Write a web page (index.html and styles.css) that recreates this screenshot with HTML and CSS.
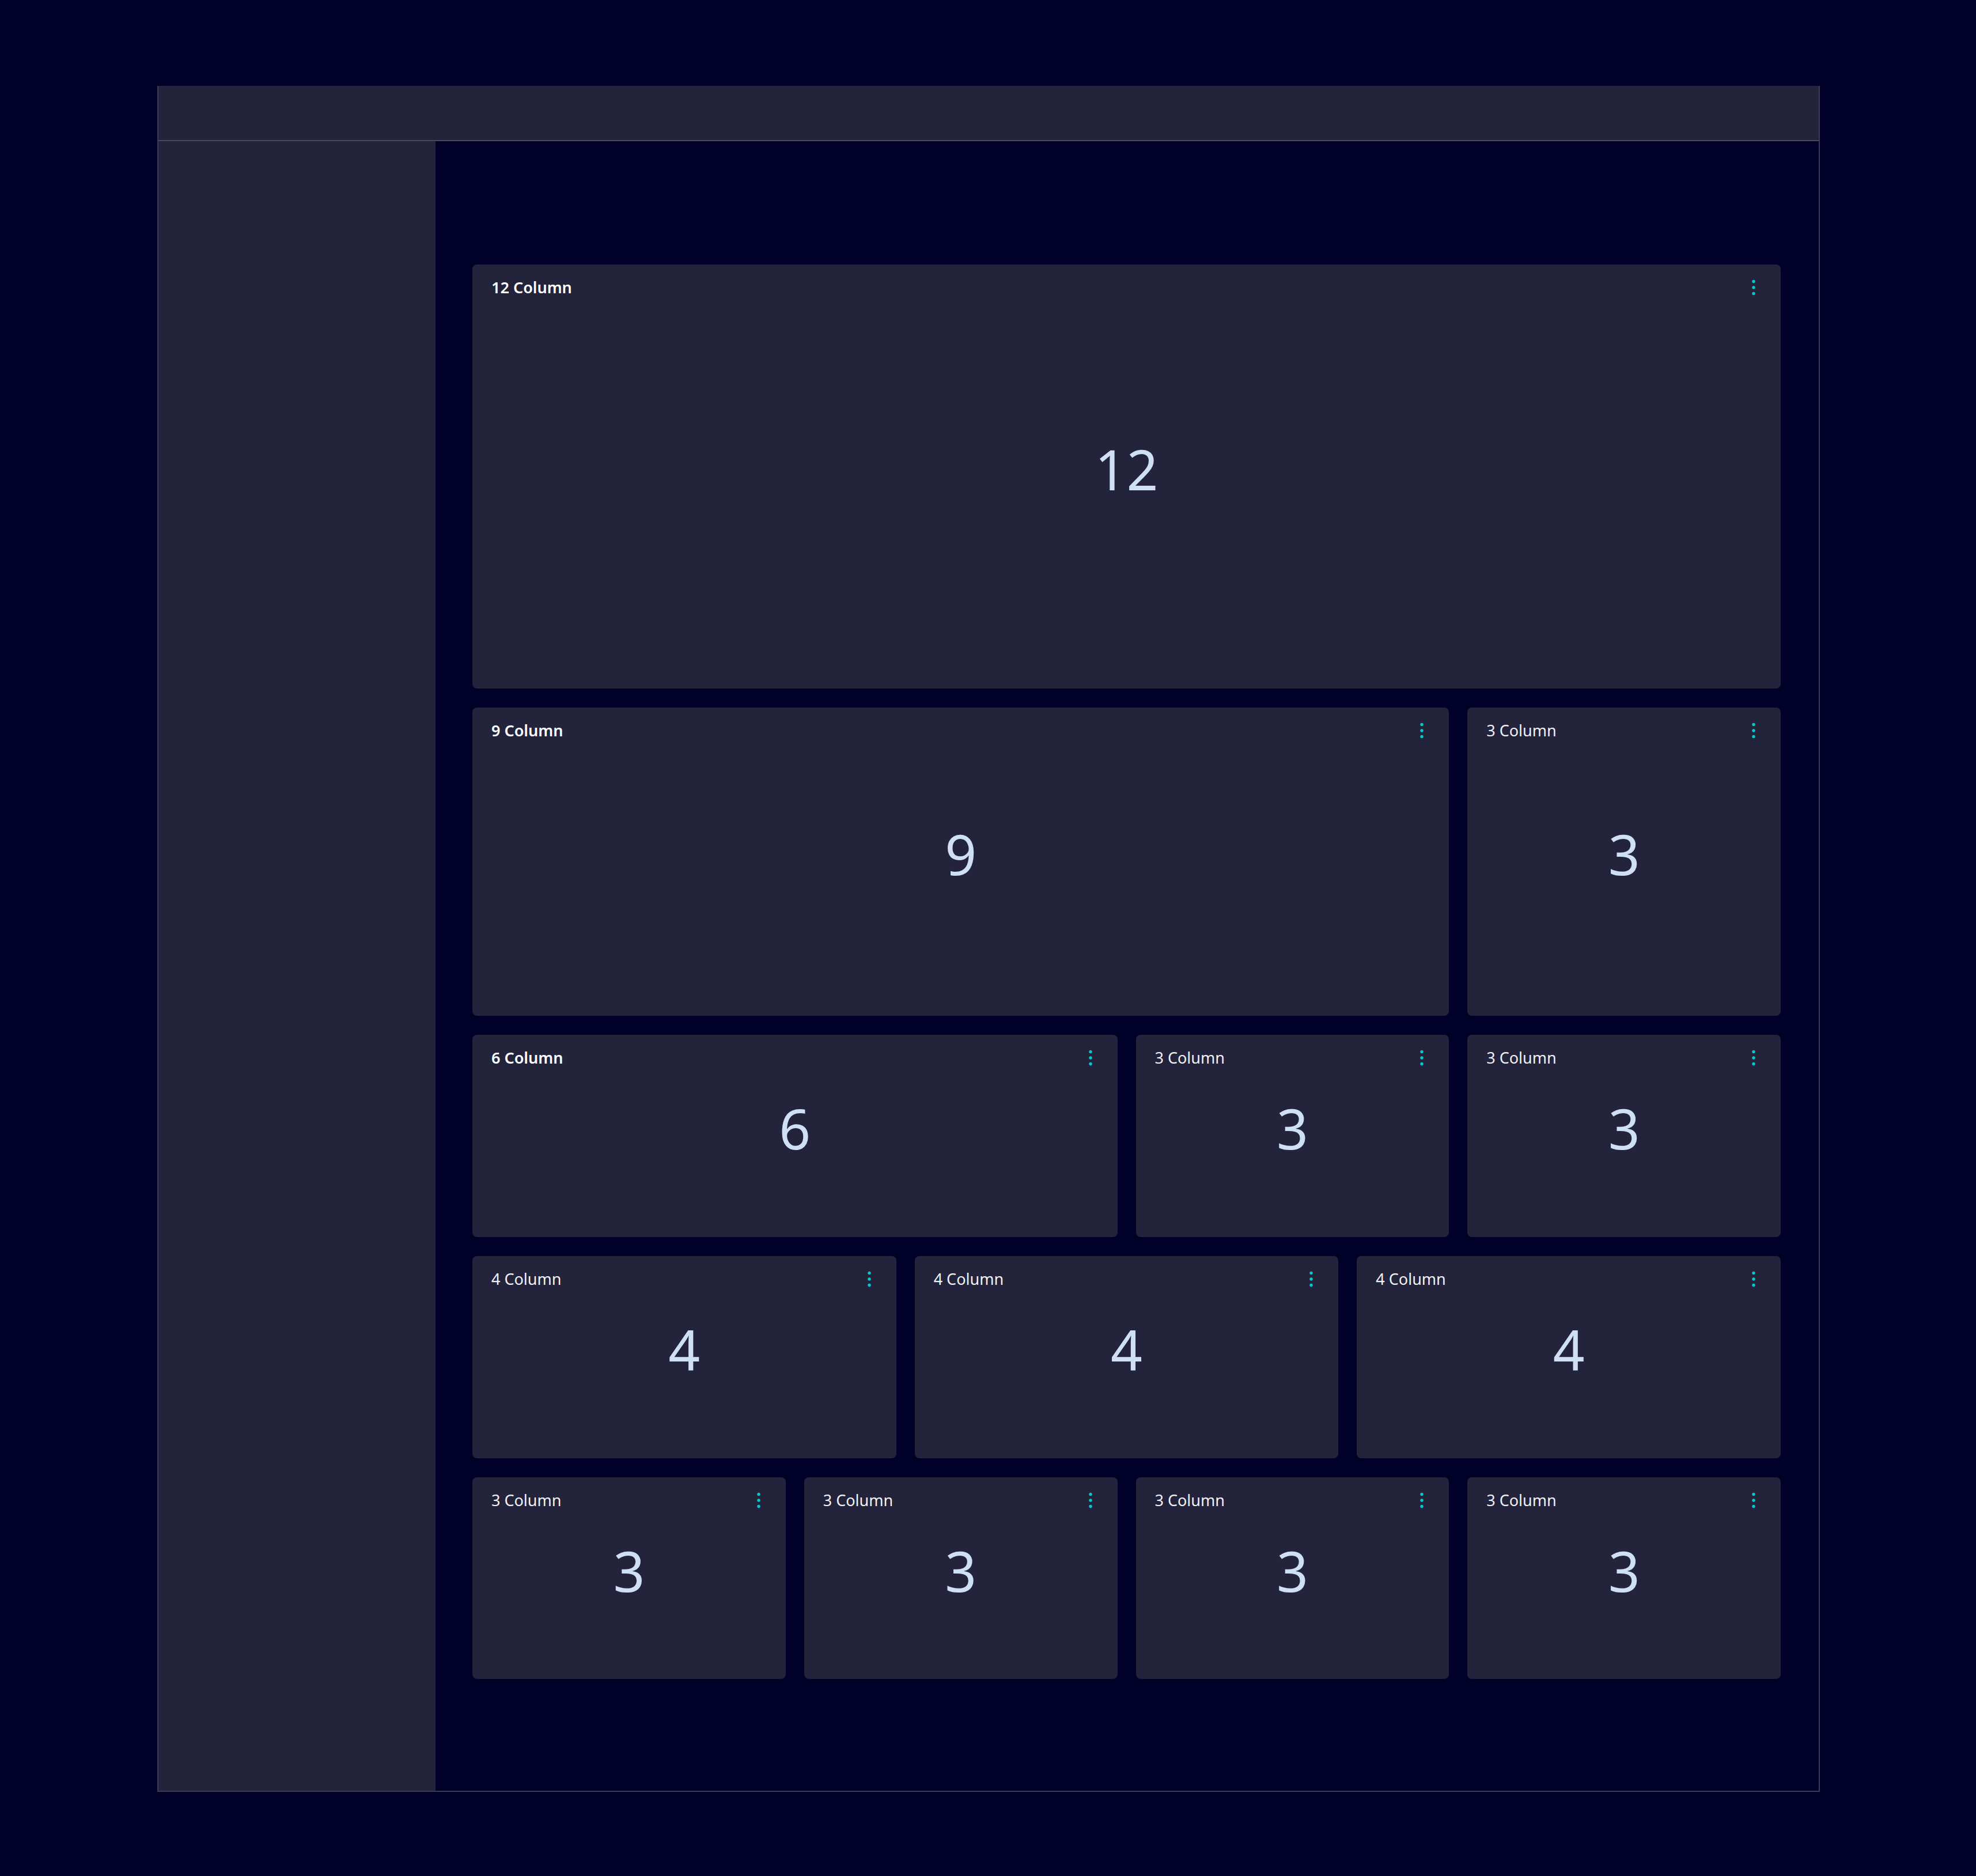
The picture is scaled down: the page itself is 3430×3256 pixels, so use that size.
FILE: index.html
```html
<!DOCTYPE html>
<html lang="en">
<head>
<meta charset="utf-8">
<title>Grid layout</title>
<link rel="stylesheet" href="styles.css">
</head>
<body>
<div class="frame">
  <header class="topbar"></header>
  <aside class="sidebar"></aside>
  <main class="content">
    <div class="grid">
      <section class="card span-12">
        <div class="card-head"><span class="title bold">12 Column</span><svg class="kebab" viewBox="0 0 24 40"><circle cx="12" cy="9.5" r="2.7"/><circle cx="12" cy="20" r="2.7"/><circle cx="12" cy="30.5" r="2.7"/></svg></div>
        <div class="card-num">12</div>
      </section>
      <section class="card span-9">
        <div class="card-head"><span class="title bold">9 Column</span><svg class="kebab" viewBox="0 0 24 40"><circle cx="12" cy="9.5" r="2.7"/><circle cx="12" cy="20" r="2.7"/><circle cx="12" cy="30.5" r="2.7"/></svg></div>
        <div class="card-num">9</div>
      </section>
      <section class="card span-3">
        <div class="card-head"><span class="title">3 Column</span><svg class="kebab" viewBox="0 0 24 40"><circle cx="12" cy="9.5" r="2.7"/><circle cx="12" cy="20" r="2.7"/><circle cx="12" cy="30.5" r="2.7"/></svg></div>
        <div class="card-num">3</div>
      </section>
      <section class="card span-6">
        <div class="card-head"><span class="title bold">6 Column</span><svg class="kebab" viewBox="0 0 24 40"><circle cx="12" cy="9.5" r="2.7"/><circle cx="12" cy="20" r="2.7"/><circle cx="12" cy="30.5" r="2.7"/></svg></div>
        <div class="card-num">6</div>
      </section>
      <section class="card span-3">
        <div class="card-head"><span class="title">3 Column</span><svg class="kebab" viewBox="0 0 24 40"><circle cx="12" cy="9.5" r="2.7"/><circle cx="12" cy="20" r="2.7"/><circle cx="12" cy="30.5" r="2.7"/></svg></div>
        <div class="card-num">3</div>
      </section>
      <section class="card span-3">
        <div class="card-head"><span class="title">3 Column</span><svg class="kebab" viewBox="0 0 24 40"><circle cx="12" cy="9.5" r="2.7"/><circle cx="12" cy="20" r="2.7"/><circle cx="12" cy="30.5" r="2.7"/></svg></div>
        <div class="card-num">3</div>
      </section>
      <section class="card span-4">
        <div class="card-head"><span class="title">4 Column</span><svg class="kebab" viewBox="0 0 24 40"><circle cx="12" cy="9.5" r="2.7"/><circle cx="12" cy="20" r="2.7"/><circle cx="12" cy="30.5" r="2.7"/></svg></div>
        <div class="card-num">4</div>
      </section>
      <section class="card span-4">
        <div class="card-head"><span class="title">4 Column</span><svg class="kebab" viewBox="0 0 24 40"><circle cx="12" cy="9.5" r="2.7"/><circle cx="12" cy="20" r="2.7"/><circle cx="12" cy="30.5" r="2.7"/></svg></div>
        <div class="card-num">4</div>
      </section>
      <section class="card span-4">
        <div class="card-head"><span class="title">4 Column</span><svg class="kebab" viewBox="0 0 24 40"><circle cx="12" cy="9.5" r="2.7"/><circle cx="12" cy="20" r="2.7"/><circle cx="12" cy="30.5" r="2.7"/></svg></div>
        <div class="card-num">4</div>
      </section>
      <section class="card span-3">
        <div class="card-head"><span class="title">3 Column</span><svg class="kebab" viewBox="0 0 24 40"><circle cx="12" cy="9.5" r="2.7"/><circle cx="12" cy="20" r="2.7"/><circle cx="12" cy="30.5" r="2.7"/></svg></div>
        <div class="card-num">3</div>
      </section>
      <section class="card span-3">
        <div class="card-head"><span class="title">3 Column</span><svg class="kebab" viewBox="0 0 24 40"><circle cx="12" cy="9.5" r="2.7"/><circle cx="12" cy="20" r="2.7"/><circle cx="12" cy="30.5" r="2.7"/></svg></div>
        <div class="card-num">3</div>
      </section>
      <section class="card span-3">
        <div class="card-head"><span class="title">3 Column</span><svg class="kebab" viewBox="0 0 24 40"><circle cx="12" cy="9.5" r="2.7"/><circle cx="12" cy="20" r="2.7"/><circle cx="12" cy="30.5" r="2.7"/></svg></div>
        <div class="card-num">3</div>
      </section>
      <section class="card span-3">
        <div class="card-head"><span class="title">3 Column</span><svg class="kebab" viewBox="0 0 24 40"><circle cx="12" cy="9.5" r="2.7"/><circle cx="12" cy="20" r="2.7"/><circle cx="12" cy="30.5" r="2.7"/></svg></div>
        <div class="card-num">3</div>
      </section>
    </div>
  </main>
</div>
</body>
</html>
```

FILE: styles.css
```css
* { box-sizing: border-box; }

html, body {
  margin: 0;
  background: #000028;
}

body {
  padding: 149px 271px 145px 273px;
  font-family: "Noto Sans", "Open Sans", sans-serif;
}

.frame {
  height: 2961px;
  display: grid;
  grid-template-columns: 481px 1fr;
  grid-template-rows: 96px 1fr;
  border-left: 2px solid #3b3b53;
  border-right: 2px solid #3b3b53;
  border-bottom: 2px solid #3b3b53;
  background: #000028;
}

.topbar {
  grid-column: 1 / 3;
  background: #23233c;
  border-bottom: 2px solid #47475f;
}

.sidebar {
  background: #23233c;
}

.content {
  padding: 214px 66px 0 64px;
}

.grid {
  display: grid;
  grid-template-columns: repeat(12, 1fr);
  grid-template-rows: 736px 535px 351px 351px 350px;
  column-gap: 32px;
  row-gap: 33px;
}

.span-12 { grid-column: span 12; }
.span-9 { grid-column: span 9; }
.span-6 { grid-column: span 6; }
.span-4 { grid-column: span 4; }
.span-3 { grid-column: span 3; }

.card {
  display: grid;
  grid-template: 1fr / 1fr;
  background: #23233c;
  border-radius: 8px;
}

.card-head {
  grid-area: 1 / 1;
  align-self: start;
  display: flex;
  align-items: center;
  justify-content: space-between;
  padding: 20px 35px 0 33px;
  height: 60px;
}

.title {
  font-size: 27px;
  line-height: 40px;
  color: #f2f2f6;
  font-weight: 400;
}

.title.bold {
  font-weight: 600;
  color: #ffffff;
}

.kebab {
  width: 24px;
  height: 40px;
  fill: #00cccc;
}

.card-num {
  grid-area: 1 / 1;
  align-self: center;
  justify-self: center;
  font-size: 96px;
  line-height: 1.362;
  color: #cfe0f6;
  padding-bottom: 26px;
}
```
